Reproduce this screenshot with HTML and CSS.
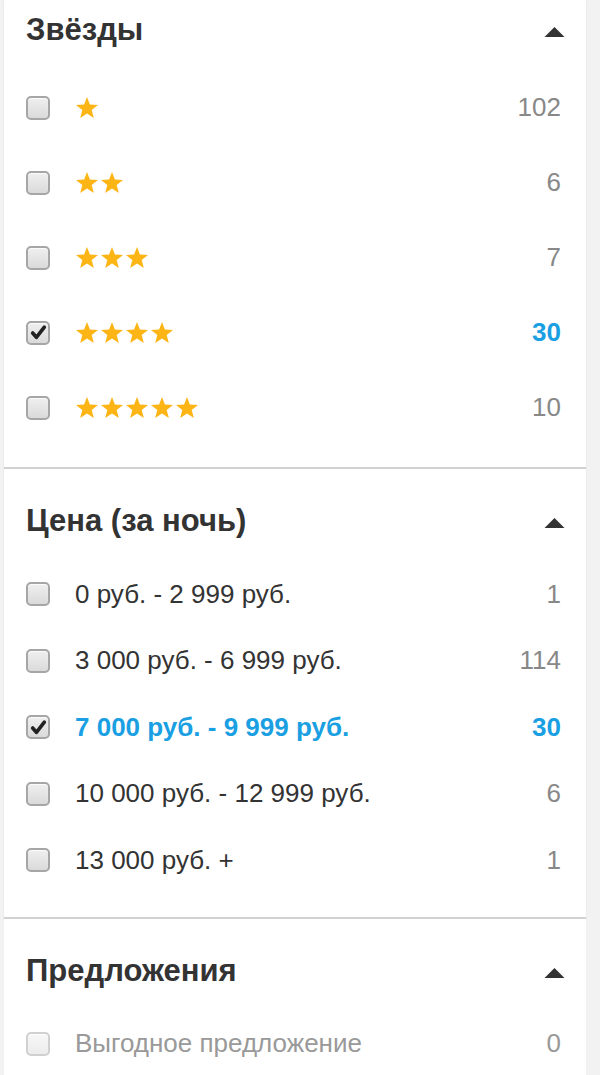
FILE: index.html
```html
<!DOCTYPE html>
<html lang="ru">
<head>
<meta charset="utf-8">
<link rel="stylesheet" href="styles.css">
</head>
<body>
<div class="panel">
  <section class="group group-first">
    <div class="group-head">
      <h2 class="group-title">Звёзды</h2>
      <svg class="caret" viewBox="0 0 20 10" width="21" height="10"><polygon points="0,10 10,0 20,10" fill="#333"/></svg>
    </div>
    <ul class="rows rows-stars">
      <li class="row"><span class="cb"></span><span class="stars"><svg class="star" viewBox="0 0 24 24"><use href="#s"/></svg></span><span class="count">102</span></li>
      <li class="row"><span class="cb"></span><span class="stars"><svg class="star" viewBox="0 0 24 24"><use href="#s"/></svg><svg class="star" viewBox="0 0 24 24"><use href="#s"/></svg></span><span class="count">6</span></li>
      <li class="row"><span class="cb"></span><span class="stars"><svg class="star" viewBox="0 0 24 24"><use href="#s"/></svg><svg class="star" viewBox="0 0 24 24"><use href="#s"/></svg><svg class="star" viewBox="0 0 24 24"><use href="#s"/></svg></span><span class="count">7</span></li>
      <li class="row active"><span class="cb checked"><svg class="tick" viewBox="0 0 16 16"><path d="M2.5 8.5 L6 12.5 L13.5 3" fill="none" stroke="#222" stroke-width="3.4" stroke-linecap="round" stroke-linejoin="round"/></svg></span><span class="stars"><svg class="star" viewBox="0 0 24 24"><use href="#s"/></svg><svg class="star" viewBox="0 0 24 24"><use href="#s"/></svg><svg class="star" viewBox="0 0 24 24"><use href="#s"/></svg><svg class="star" viewBox="0 0 24 24"><use href="#s"/></svg></span><span class="count">30</span></li>
      <li class="row"><span class="cb"></span><span class="stars"><svg class="star" viewBox="0 0 24 24"><use href="#s"/></svg><svg class="star" viewBox="0 0 24 24"><use href="#s"/></svg><svg class="star" viewBox="0 0 24 24"><use href="#s"/></svg><svg class="star" viewBox="0 0 24 24"><use href="#s"/></svg><svg class="star" viewBox="0 0 24 24"><use href="#s"/></svg></span><span class="count">10</span></li>
    </ul>
  </section>

  <section class="group">
    <div class="group-head">
      <h2 class="group-title">Цена (за ночь)</h2>
      <svg class="caret" viewBox="0 0 20 10" width="21" height="10"><polygon points="0,10 10,0 20,10" fill="#333"/></svg>
    </div>
    <ul class="rows rows-price">
      <li class="row"><span class="cb"></span><span class="label">0 руб. - 2 999 руб.</span><span class="count">1</span></li>
      <li class="row"><span class="cb"></span><span class="label">3 000 руб. - 6 999 руб.</span><span class="count">114</span></li>
      <li class="row active"><span class="cb checked"><svg class="tick" viewBox="0 0 16 16"><path d="M2.5 8.5 L6 12.5 L13.5 3" fill="none" stroke="#222" stroke-width="3.4" stroke-linecap="round" stroke-linejoin="round"/></svg></span><span class="label">7 000 руб. - 9 999 руб.</span><span class="count">30</span></li>
      <li class="row"><span class="cb"></span><span class="label">10 000 руб. - 12 999 руб.</span><span class="count">6</span></li>
      <li class="row"><span class="cb"></span><span class="label">13 000 руб. +</span><span class="count">1</span></li>
    </ul>
  </section>

  <section class="group group-last">
    <div class="group-head">
      <h2 class="group-title">Предложения</h2>
      <svg class="caret" viewBox="0 0 20 10" width="21" height="10"><polygon points="0,10 10,0 20,10" fill="#333"/></svg>
    </div>
    <ul class="rows rows-price">
      <li class="row disabled"><span class="cb"></span><span class="label">Выгодное предложение</span><span class="count">0</span></li>
    </ul>
  </section>
</div>
<svg width="0" height="0" class="defs"><defs><polygon id="s" fill="#fdb515" points="12,1 14.9,8.6 23,9 16.7,14.1 18.8,22 12,17.6 5.2,22 7.3,14.1 1,9 9.1,8.6"/></defs></svg>
</body>
</html>
```

FILE: styles.css
```css
html, body {
  margin: 0;
  padding: 0;
}
body {
  background: #f2f2f2;
  font-family: "Liberation Sans", Arial, sans-serif;
  color: #333;
  width: 600px;
  height: 1075px;
  overflow: hidden;
}
.panel {
  margin-left: 4px;
  width: 582px;
  background: #f2f2f2;
}
.group {
  background: #fff;
  padding: 36px 25px 23px 22px;
  border-bottom: 2px solid #d2d2d2;
  box-shadow: 0 1px 2px rgba(0,0,0,0.08);
}
.group-first {
  padding-top: 14px;
  padding-bottom: 22px;
}
.group-last {
  border-bottom: none;
  box-shadow: none;
  padding-bottom: 40px;
}
.group-head {
  display: flex;
  align-items: center;
  justify-content: space-between;
  height: 32px;
}
.group-title {
  margin: 0;
  font-size: 31px;
  font-weight: bold;
  line-height: 32px;
  color: #333;
}
.caret {
  display: block;
  margin-right: -4px;
  margin-top: 4px;
}
.rows {
  list-style: none;
  margin: 24px 0 0;
  padding: 0;
}
.row {
  display: flex;
  align-items: center;
  font-size: 26px;
  color: #333;
}
.rows-stars .row { height: 75px; }
.rows-price .row { height: 66.5px; }
.cb {
  box-sizing: border-box;
  width: 24px;
  height: 24px;
  border: 2px solid #a6a6a6;
  border-radius: 5px;
  background: linear-gradient(#efefef, #dadada);
  box-shadow: inset 0 1px 1px rgba(255,255,255,0.8);
  flex: none;
  display: flex;
  align-items: center;
  justify-content: center;
  margin-right: 25px;
}
.tick {
  width: 17px;
  height: 17px;
}
.stars {
  display: flex;
  gap: 1px;
  flex: 1;
}
.star {
  width: 24px;
  height: 24px;
  display: block;
}
.label {
  flex: 1;
}
.count {
  color: #888;
  text-align: right;
}
.active .label, .active .count {
  color: #1a9fe3;
  font-weight: bold;
}
.disabled .label, .disabled .count {
  color: #999;
}
.disabled .cb {
  border-color: #d0d0d0;
  background: linear-gradient(#f7f7f7, #ececec);
}
.defs {
  position: absolute;
}
```
